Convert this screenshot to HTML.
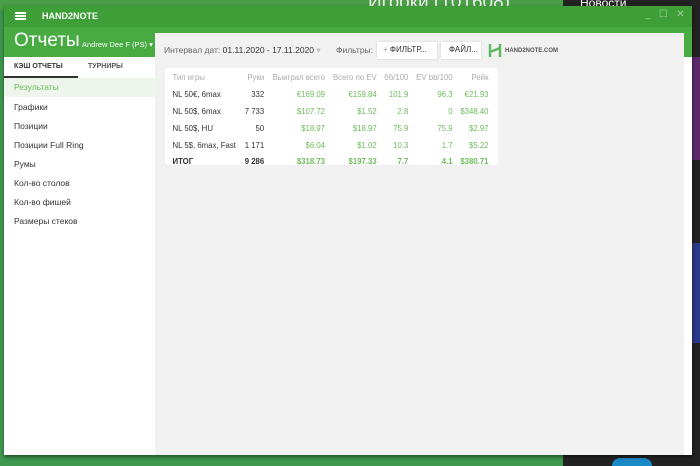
<!DOCTYPE html>
<html style="overflow:hidden;width:700px;height:466px"><head><meta charset="utf-8"><style>
*{margin:0;padding:0;box-sizing:border-box}
body{width:700px;height:466px;overflow:hidden;position:relative;background:#3f9a50;font-family:"Liberation Sans",sans-serif}
.abs{position:absolute}
.t{font-size:11px;color:#333}
table{border-collapse:collapse;font-size:7.8px}
td{height:17px;padding:0 3.5px;text-align:right;color:#6cbb5a;white-space:nowrap}
td:first-child{text-align:left;color:#333}
td.k{color:#333}
tr.h td{color:#aaa;height:18px}
tr.b td{font-weight:bold;height:14px}
</style></head><body>
<div class="abs" style="left:0;top:0;width:563px;height:10px;background:#4a9e45"></div>
<div class="abs" style="left:368px;top:-8px;font-size:19px;color:#eee">Игроки (101608)</div>
<div class="abs" style="left:563px;top:0;width:137px;height:466px;background:#222"></div>
<div class="abs" style="left:580px;top:-4px;font-size:12px;color:#fff">Новости</div>
<div class="abs" style="left:692px;top:57px;width:8px;height:103px;background:#5a2a6a"></div>
<div class="abs" style="left:692px;top:243px;width:8px;height:100px;background:#2b3a8a"></div>
<div class="abs" style="left:612px;top:458px;width:40px;height:8px;border-radius:20px 20px 0 0;background:#1a8ac8"></div>
<div class="abs" style="left:4px;top:6px;width:688px;height:449px;background:#fff;box-shadow:0 2px 4px rgba(0,0,0,.5)"></div>
<div class="abs" style="left:4px;top:6px;width:688px;height:21px;background:#3e9e38"></div>
<div class="abs" style="left:15px;top:12px;width:11px;height:2px;background:#fff;box-shadow:0 3px 0 #fff,0 6px 0 #fff"></div>
<div class="abs" style="left:42px;top:11px;font-size:9px;color:#fff;font-weight:bold">HAND2NOTE</div>
<div class="abs" style="left:645px;top:9px;font-size:10px;color:#9ed49a">_&nbsp;&nbsp;&nbsp;☐&nbsp;&nbsp;&nbsp;✕</div>
<div class="abs" style="left:4px;top:27px;width:688px;height:30px;background:#47ab41"></div>
<div class="abs" style="left:14px;top:30px;font-size:19px;color:#fff">Отчеты</div>
<div class="abs" style="left:82px;top:40px;font-size:7.5px;color:#fff">Andrew Dee F (PS) ▾</div>
<div class="abs" style="left:155px;top:33px;width:529px;height:422px;background:#f1f1f1"></div>
<div class="abs" style="left:4px;top:57px;width:151px;height:398px;background:#fff"></div>
<div class="abs" style="left:14px;top:63px;font-size:7px;color:#333;font-weight:bold">КЭШ ОТЧЕТЫ</div>
<div class="abs" style="left:88px;top:63px;font-size:7px;color:#555;font-weight:bold">ТУРНИРЫ</div>
<div class="abs" style="left:4px;top:76px;width:74px;height:2px;background:#333"></div>
<div class="abs" style="left:4px;top:78px;width:151px;height:19px;background:#eef5ec"></div>
<div class="abs t" style="left:14px;top:82px;font-size:8.5px;color:#6cbb5a">Результаты</div>
<div class="abs t" style="left:14px;top:102px;font-size:8.5px">Графики</div>
<div class="abs t" style="left:14px;top:121px;font-size:8.5px">Позиции</div>
<div class="abs t" style="left:14px;top:140px;font-size:8.5px">Позиции Full Ring</div>
<div class="abs t" style="left:14px;top:159px;font-size:8.5px">Румы</div>
<div class="abs t" style="left:14px;top:178px;font-size:8.5px">Кол-во столов</div>
<div class="abs t" style="left:14px;top:197px;font-size:8.5px">Кол-во фишей</div>
<div class="abs t" style="left:14px;top:216px;font-size:8.5px">Размеры стеков</div>
<div class="abs" style="left:164px;top:45px;font-size:8.5px;color:#666">Интервал дат: <span style="color:#333">01.11.2020 - 17.11.2020</span> <span style="color:#bbb">▾</span></div>
<div class="abs" style="left:336px;top:45px;font-size:8.5px;color:#666">Фильтры:</div>
<div class="abs" style="left:377px;top:42px;width:60px;height:17px;background:#fff;box-shadow:0 0 2px #ccc;font-size:8px;color:#333;padding:3px 0 0 6px"><span style="color:#999">+</span> ФИЛЬТР...</div>
<div class="abs" style="left:441px;top:42px;width:40px;height:17px;background:#fff;box-shadow:0 0 2px #ccc;font-size:8px;color:#333;padding:3px 0 0 8px">ФАЙЛ...</div>
<svg class="abs" style="left:488px;top:43px" width="14" height="15"><path d="M2 1v13M12 1v13M2 9L12 5" stroke="#5cb85c" stroke-width="2.4" fill="none"/></svg>
<div class="abs" style="left:505px;top:48px;font-size:6px;color:#555;font-weight:bold">HAND2NOTE.COM</div>
<div class="abs" style="left:165px;top:68px;width:333px;height:97px;background:#fff;border-radius:3px;padding:0 6px 0 4px">
<table style="width:100%">
<tr class="h"><td style="color:#aaa">Тип игры</td><td>Руки</td><td>Выиграл всего</td><td>Всего по EV</td><td>бб/100</td><td>EV bb/100</td><td>Рейк</td></tr>
<tr><td>NL 50€, 6max</td><td class="k">332</td><td>€169.09</td><td>€159.84</td><td>101.9</td><td>96.3</td><td>€21.93</td></tr>
<tr><td>NL 50$, 6max</td><td class="k">7 733</td><td>$107.72</td><td>$1.52</td><td>2.8</td><td>0</td><td>$348.40</td></tr>
<tr><td>NL 50$, HU</td><td class="k">50</td><td>$18.97</td><td>$18.97</td><td>75.9</td><td>75.9</td><td>$2.97</td></tr>
<tr><td>NL 5$, 6max, Fast</td><td class="k">1 171</td><td>$6.04</td><td>$1.02</td><td>10.3</td><td>1.7</td><td>$5.22</td></tr>
<tr class="b"><td>ИТОГ</td><td class="k">9 286</td><td>$318.73</td><td>$197.33</td><td>7.7</td><td>4.1</td><td>$380.71</td></tr>
</table></div>
</body></html>
